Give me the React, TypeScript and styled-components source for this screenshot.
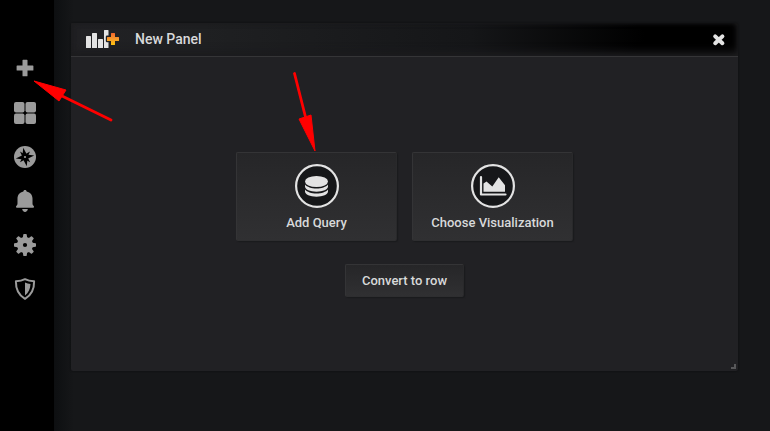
import React from "react";
import styled, { createGlobalStyle } from "styled-components";

const GlobalStyle = createGlobalStyle`
  * { box-sizing: border-box; }
  html, body, #root { height: 100%; }
  body {
    margin: 0;
    background: #161719;
    color: #d8d9da;
    font-family: Roboto, "Liberation Sans", sans-serif;
    font-size: 13px;
  }
`;

const Page = styled.div`
  display: flex;
  min-height: 100%;
`;

const SideMenu = styled.nav`
  flex: 0 0 54px;
  display: flex;
  flex-direction: column;
  padding: 47px 4px 0 0;
  background: #000;
`;

const SideLink = styled.a`
  display: flex;
  align-items: center;
  justify-content: center;
  height: 44px;
  color: #9b9b9b;
  svg { display: block; }
`;

const Main = styled.main`
  flex: 1;
  min-width: 0;
  padding: 23px 32px 32px 17px;
  background: linear-gradient(90deg, #0d0f11 0, #161719 20px);
`;

const Panel = styled.section`
  position: relative;
  background: #212124;
  border-radius: 2px;
  box-shadow: 0 0 2px #0b0c0e;
`;

const PanelHeader = styled.header`
  display: flex;
  align-items: center;
  height: 34px;
  padding: 0 12px 2px 14px;
  border-bottom: 1px solid #353537;
  border-radius: 2px 2px 0 0;
  background: linear-gradient(90deg, #212124 0%, #1f2022 20%, #151618 60%, #000 86%, #000 100%);
  box-shadow: inset 0 -4px 8px 0 #1c1c1e, inset 0 0 5px 0 #1c1c1e;
`;

const PanelTitle = styled.h1`
  flex: 1;
  margin: 0 0 0 15px;
  font-size: 14px;
  line-height: 20px;
  font-weight: 500;
`;

const CloseButton = styled.button`
  display: flex;
  padding: 2px 0 0;
  border: 0;
  background: none;
  color: #e3e3e3;
  cursor: pointer;
`;

const PanelBody = styled.div`
  display: flex;
  flex-direction: column;
  align-items: center;
  gap: 23px;
  padding: 95px 16px 74px;
`;

const Choices = styled.div`
  display: flex;
  justify-content: center;
  gap: 15px;
`;

const Button = styled.button<{ $tile?: boolean }>`
  display: flex;
  flex-direction: column;
  align-items: center;
  justify-content: center;
  gap: 5px;
  width: ${(p) => (p.$tile ? "161px" : "auto")};
  height: ${(p) => (p.$tile ? "89px" : "33px")};
  padding: ${(p) => (p.$tile ? "4px 0 0" : "0 16px")};
  border: 1px solid #343436;
  border-right-color: #29292b;
  border-bottom-color: #2e2e30;
  border-radius: 2px;
  background: linear-gradient(180deg, #262628, #303032);
  box-shadow: 1px 1px 1px #1a1b1d;
  color: #d8d9da;
  font-family: inherit;
  font-size: 13px;
  line-height: 20px;
  font-weight: 500;
  white-space: nowrap;
  cursor: pointer;
`;

const ResizeCorner = styled.span`
  position: absolute;
  right: 2px;
  bottom: 2px;
  width: 5px;
  height: 5px;
  border: solid #58585a;
  border-width: 0 2px 2px 0;
`;

const Annotations = styled.svg`
  position: absolute;
  top: 0;
  left: 0;
  pointer-events: none;
`;

const PlusIcon = () => (
  <svg width="22" height="22" viewBox="0 0 22 22" fill="currentColor" aria-hidden="true">
    <path d="M9.100 1.700h3.800q.6 0 .6.6v5.200h5.300q.6 0 .6.6v3.800q0 .6-.6.6h-5.300v5.200q0 .6-.6.6H9.100q-.6 0-.6-.6v-5.200H3.200q-.6 0-.6-.6V8.100q0-.6.6-.6h5.300V2.300q0-.6.6-.6z" />
  </svg>
);

const DashboardsIcon = () => (
  <svg width="22" height="22" viewBox="0 0 22 22" fill="currentColor" aria-hidden="true">
    <rect width="10.500" height="10.500" rx="2" />
    <rect x="11.500" width="10.500" height="10.500" rx="2" />
    <rect y="11.500" width="10.500" height="10.500" rx="2" />
    <rect x="11.500" y="11.500" width="10.500" height="10.500" rx="2" />
  </svg>
);

const ExploreIcon = () => (
  <svg width="22" height="22" viewBox="0 0 22 22" aria-hidden="true">
    <circle cx="11" cy="11" r="11" fill="currentColor" />
    <g fill="#000">
      <path d="M9.300 1.800 12.800 8.400 20.200 9.400 13.600 12.800 12.700 20.200 9.200 13.600 1.800 12.600 8.400 9.200z" />
      <path d="M6 5.600 10.800 8.500 16 5.600 13.500 11 16.200 16.200 11 13.500 6 16.200 8.500 11z" />
    </g>
    <circle cx="11" cy="11" r="1.100" fill="currentColor" />
  </svg>
);

const BellIcon = () => (
  <svg width="22" height="22" viewBox="0 0 22 22" fill="currentColor" aria-hidden="true">
    <path d="M11 0c1 0 1.600.7 1.600 1.500 3.900.9 5.900 3.700 5.900 7v4.800c0 1.300.3 2 1 2.500.4.3.5.7.5 1.200 0 .6-.3.800-.9.800H2.900c-.6 0-.9-.2-.9-.8 0-.5.100-.9.500-1.200.7-.5 1-1.200 1-2.500V8.500c0-3.300 2-6.100 5.900-7C9.400.7 10 0 11 0z" />
    <path d="M8.200 19h5.600c-.2 1.800-1.300 2.900-2.800 2.900S8.400 20.800 8.200 19z" />
  </svg>
);

const GearIcon = () => (
  <svg width="22" height="22" viewBox="0 0 22 22" aria-hidden="true">
    <g fill="currentColor">
      <circle cx="11" cy="11" r="8" />
      {[0, 45, 90, 135, 180, 225, 270, 315].map((angle) => (
        <path key={angle} d="M9.900 0h2.200q.5 0 .600.500L13.400 5H8.600L9.300.500q.1-.5.600-.5z" transform={`rotate(${angle} 11 11)`} />
      ))}
    </g>
    <circle cx="11" cy="11" r="2.100" fill="#000" />
  </svg>
);

const ShieldIcon = () => (
  <svg width="22" height="22" viewBox="0 0 22 22" aria-hidden="true">
    <path
      d="M11 1.200C8.300 2.700 5 3.200 1.900 3.200 1.700 11 4.500 17 11 20.800 17.500 17 20.300 11 20.100 3.200 17 3.200 13.700 2.700 11 1.200z"
      fill="none"
      stroke="currentColor"
      strokeWidth="2"
      strokeLinejoin="round"
    />
    <path d="M11 4.400c1.700.8 3.500 1.300 5.500 1.500-.2 4.700-2 8.800-5.500 11.600z" fill="currentColor" />
  </svg>
);

const AddPanelIcon = () => (
  <svg width="35" height="20" viewBox="0 0 35 20" aria-hidden="true">
    <defs>
      <linearGradient id="plus-fill" x1="0" y1="0" x2="0" y2="1">
        <stop offset="0" stopColor="#f2642c" />
        <stop offset=".5" stopColor="#f79b2c" />
        <stop offset="1" stopColor="#fcc20f" />
      </linearGradient>
    </defs>
    <g fill="#e3e3e3">
      <rect x="1" y="7" width="5" height="12" rx=".5" />
      <rect x="7" y="4" width="5" height="15" rx=".5" />
      <rect x="13" y="10" width="5" height="9" rx=".5" />
      <path d="M19.500 1H23q.5 0 .500.500V6.500h-1.500q-1.200 0-1.200 1.200v4.300q0 1.200 1.200 1.200h1.500v5.300q0 .5-.500.500h-3.500q-.5 0-.500-.5v-17q0-.5.500-.5z" />
    </g>
    <path
      d="M26.500 4h3q.5 0 .500.500V8h3.500q.5 0 .500.500v3q0 .5-.500.500H30v3.500q0 .5-.500.500h-3q-.5 0-.500-.5V12h-3.500q-.5 0-.500-.5v-3q0-.5.500-.5H26V4.500q0-.5.500-.5z"
      fill="url(#plus-fill)"
    />
  </svg>
);

const CloseIcon = () => (
  <svg width="14" height="14" viewBox="0 0 14 14" aria-hidden="true">
    <path d="M3.200 3.400 10.400 10.200M10.400 3.400 3.200 10.200" stroke="currentColor" strokeWidth="4" strokeLinecap="round" />
  </svg>
);

const QueryIcon = () => (
  <svg width="44" height="44" viewBox="0 0 44 44" aria-hidden="true">
    <circle cx="22" cy="22" r="20.900" fill="#161719" stroke="#e3e3e3" strokeWidth="2.200" />
    <g fill="#e3e3e3">
      <ellipse cx="21.500" cy="17.500" rx="11.500" ry="5.500" />
      <path d="M10 20.500c2 2.500 6.500 4 11.500 4s9.500-1.500 11.500-4v2c0 2.900-5.100 5.200-11.500 5.200S10 25.400 10 22.500z" />
      <path d="M10 25.500c2 2.500 6.500 4 11.500 4s9.500-1.500 11.500-4v2c0 2.900-5.100 5.200-11.500 5.200S10 30.400 10 27.500z" />
    </g>
  </svg>
);

const VisualizationIcon = () => (
  <svg width="44" height="44" viewBox="0 0 44 44" aria-hidden="true">
    <circle cx="22" cy="22" r="20.900" fill="#161719" stroke="#e3e3e3" strokeWidth="2.200" />
    <path d="M10 13v17.500h24.500" fill="none" stroke="#e3e3e3" strokeWidth="2.200" strokeLinecap="round" strokeLinejoin="round" />
    <path d="M12.500 19.500 15.500 17.500 21.300 22.500 27.700 13.200 34 21.300V27.700H12.500z" fill="#e3e3e3" />
  </svg>
);

const menu = [
  { label: "Create", Icon: PlusIcon },
  { label: "Dashboards", Icon: DashboardsIcon },
  { label: "Explore", Icon: ExploreIcon },
  { label: "Alerting", Icon: BellIcon },
  { label: "Configuration", Icon: GearIcon },
  { label: "Server Admin", Icon: ShieldIcon },
];

export default function App() {
  return (
    <>
      <GlobalStyle />
      <Page>
        <SideMenu aria-label="Main">
          {menu.map(({ label, Icon }) => (
            <SideLink key={label} href="#" aria-label={label}>
              <Icon />
            </SideLink>
          ))}
        </SideMenu>
        <Main>
          <Panel>
            <PanelHeader>
              <AddPanelIcon />
              <PanelTitle>New Panel</PanelTitle>
              <CloseButton type="button" aria-label="Close">
                <CloseIcon />
              </CloseButton>
            </PanelHeader>
            <PanelBody>
              <Choices>
                <Button type="button" $tile>
                  <QueryIcon />
                  Add Query
                </Button>
                <Button type="button" $tile>
                  <VisualizationIcon />
                  Choose Visualization
                </Button>
              </Choices>
              <Button type="button">Convert to row</Button>
            </PanelBody>
            <ResizeCorner />
          </Panel>
        </Main>
      </Page>
      <Annotations width="330" height="160" viewBox="0 0 330 160" fill="#f00" stroke="#f00" aria-hidden="true">
        <path d="M111 120 60 95M294.500 73.500 306 119" strokeWidth="2.800" strokeLinecap="round" />
        <path d="M34 81 66 90 59 101zM315 151 299 119 311 115z" strokeWidth="1" strokeLinejoin="round" />
      </Annotations>
    </>
  );
}
